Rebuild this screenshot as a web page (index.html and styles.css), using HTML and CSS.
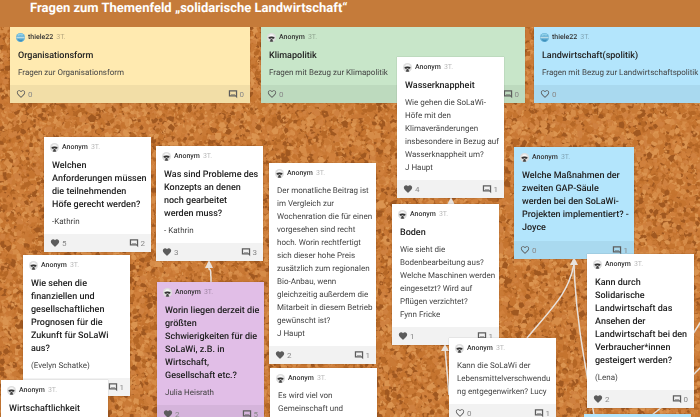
FILE: index.html
```
<!DOCTYPE html>
<html lang="de">
<head>
    <meta charset="utf-8">
    <title>Fragen zum Themenfeld „solidarische Landwirtschaft“</title>
    <link rel="stylesheet" href="styles.css">
</head>
<body>

    <!-- shared icons -->
    <svg class="sprite" aria-hidden="true">
        <symbol id="heart" viewBox="0 0 24 24">
            <path d="M12 21.3l-1.5-1.3C5.4 15.4 2 12.3 2 8.5 2 5.4 4.4 3 7.500 3c1.700 0 3.400.8 4.500 2.100C13.100 3.800 14.800 3 16.500 3 19.600 3 22 5.400 22 8.500c0 3.800-3.400 6.900-8.500 11.500z"/>
        </symbol>
        <symbol id="heart-line" viewBox="0 0 24 24">
            <path d="M16.500 3c-1.700 0-3.400.8-4.500 2.100C10.900 3.800 9.200 3 7.500 3 4.400 3 2 5.400 2 8.500c0 3.800 3.400 6.900 8.500 11.500l1.500 1.300 1.500-1.300C18.600 15.400 22 12.300 22 8.500 22 5.400 19.600 3 16.500 3zM12 18.600C7.200 14.200 4 11.400 4 8.500 4 6.500 5.500 5 7.500 5c1.500 0 3 1 3.600 2.400h1.800C13.500 6 15 5 16.500 5 18.500 5 20 6.500 20 8.500c0 2.900-3.200 5.700-8 10.100z"/>
        </symbol>
        <symbol id="comment" viewBox="0 0 24 24">
            <path fill-rule="evenodd" d="M2 3h20v19l-4-4H2zM5 6v9h14V6z"/>
            <path d="M7 12h10v2H7z" opacity=".6"/>
        </symbol>
        <symbol id="anon" viewBox="0 0 24 24">
            <circle cx="12" cy="12" r="12" fill="#dedede"/>
            <path d="M6 8c1-5 11-5 12 0z" fill="#fafafa"/>
            <path d="M4 11c5-2 11-2 16 0v2c-2 3-5 3-7 1h-2c-2 2-5 2-7-1z" fill="#333"/>
            <path d="M9 16h6l-1 2 3 4c-3 2-7 2-10 0l3-4z" fill="#444"/>
        </symbol>
        <symbol id="globe" viewBox="0 0 24 24">
            <circle cx="12" cy="12" r="12" fill="#62afd5"/>
            <path d="M3 5c5-5 13-5 18 0l-5 2-5-1-5 2z" fill="#8fd0e8"/>
            <path d="M1 10h22v4H1z" fill="#b9dbe6"/>
            <path d="M4 16l7 2 8-1-3 5c-5 2-9 0-12-6z" fill="#3e91bd"/>
        </symbol>
    </svg>

    <header class="topbar">
        <h1>Fragen zum Themenfeld „solidarische Landwirtschaft“</h1>
    </header>

    <main class="board">
        <canvas class="cork" id="cork"></canvas>

        <!-- arrows between cards -->
        <svg class="links" aria-hidden="true">
            <path d="M211 255v-5c-1-6 1-7-2-8v-6"/>
            <path class="head" d="M209 233l4 8h-8z"/>
            <path class="head" d="M451 170l4 8h-8z"/>
            <path d="M449 368l-4-47"/>
            <path class="head" d="M445 317l4 7h-8z"/>
            <path d="M527 311c24-29 42-45 47-74"/>
            <path d="M596 400c-8-50-20-100-22-163"/>
            <path class="head" d="M574 230l4 8h-8z"/>
            <path d="M693 307l10-16M693 348l10-10"/>
            <path d="M652 388l10-8"/>
        </svg>

        <article class="card yellow c-orga">
            <div class="by"><svg><use href="#globe"/></svg><b>thiele22</b><time>3T.</time></div>
            <h2>Organisationsform</h2>
            <p>Fragen zur Organisationsform</p>
            <footer><button aria-label="Gefällt mir"><svg><use href="#heart-line"/></svg>0</button><button aria-label="Kommentare"><svg><use href="#comment"/></svg>0</button></footer>
        </article>

        <article class="card green c-klima">
            <div class="by"><svg><use href="#anon"/></svg><b>Anonym</b><time>3T.</time></div>
            <h2>Klimapolitik</h2>
            <p>Fragen mit Bezug zur Klimapolitik</p>
            <footer><button aria-label="Gefällt mir"><svg><use href="#heart-line"/></svg>0</button><button aria-label="Kommentare"><svg><use href="#comment"/></svg>0</button></footer>
        </article>

        <article class="card blue c-landw">
            <div class="by"><svg><use href="#globe"/></svg><b>thiele22</b><time>3T.</time></div>
            <h2>Landwirtschaft(spolitik)</h2>
            <p>Fragen mit Bezug zur Landwirtschaftspolitik</p>
            <footer><button aria-label="Gefällt mir"><svg><use href="#heart-line"/></svg>0</button></footer>
        </article>

        <article class="card c-anford">
            <div class="by"><svg><use href="#anon"/></svg><b>Anonym</b><time>3T.</time></div>
            <h2>Welchen<br>Anforderungen müssen die teilnehmenden<br>Höfe gerecht werden?</h2>
            <p>-Kathrin</p>
            <footer><button aria-label="Gefällt mir"><svg><use href="#heart"/></svg>5</button><button aria-label="Kommentare"><svg><use href="#comment"/></svg>2</button></footer>
        </article>

        <article class="card c-problem">
            <div class="by"><svg><use href="#anon"/></svg><b>Anonym</b><time>3T.</time></div>
            <h2>Was sind Probleme des Konzepts an denen noch gearbeitet<br>werden muss?</h2>
            <p>- Kathrin</p>
            <footer><button aria-label="Gefällt mir"><svg><use href="#heart"/></svg>3</button><button aria-label="Kommentare"><svg><use href="#comment"/></svg>3</button></footer>
        </article>

        <article class="card c-finanz">
            <div class="by"><svg><use href="#anon"/></svg><b>Anonym</b><time>3T.</time></div>
            <h2>Wie sehen die finanziellen und gesellschaftlichen Prognosen für die Zukunft für SoLaWi aus?</h2>
            <p>(Evelyn Schatke)</p>
            <footer><span></span><button aria-label="Kommentare"><svg><use href="#comment"/></svg>1</button></footer>
        </article>

        <article class="card c-wirt">
            <div class="by"><svg><use href="#anon"/></svg><b>Anonym</b><time>3T.</time></div>
            <h2>Wirtschaftlichkeit</h2>
        </article>

        <article class="card purple c-schwier">
            <div class="by"><svg><use href="#anon"/></svg><b>Anonym</b><time>3T.</time></div>
            <h2>Worin liegen derzeit die größten<br>Schwierigkeiten für die SoLaWi, z.B. in<br>Wirtschaft,<br>Gesellschaft etc.?</h2>
            <p>Julia Heisrath</p>
            <footer><button aria-label="Gefällt mir"><svg><use href="#heart"/></svg>2</button><button aria-label="Kommentare"><svg><use href="#comment"/></svg>5</button></footer>
        </article>

        <article class="card c-beitrag">
            <div class="by"><svg><use href="#anon"/></svg><b>Anonym</b><time>3T.</time></div>
            <p>Der monatliche Beitrag ist<br>im Vergleich zur<br>Wochenration die für einen vorgesehen sind recht<br>hoch. Worin rechtfertigt<br>sich dieser hohe Preis<br>zusätzlich zum regionalen Bio-Anbau, wenn<br>gleichzeitig außerdem die Mitarbeit in diesem Betrieb gewünscht ist?<br>J Haupt</p>
            <footer><button aria-label="Gefällt mir"><svg><use href="#heart"/></svg>2</button><button aria-label="Kommentare"><svg><use href="#comment"/></svg>1</button></footer>
        </article>

        <article class="card c-gemein">
            <div class="by"><svg><use href="#anon"/></svg><b>Anonym</b><time>3T.</time></div>
            <p>Es wird viel von<br>Gemeinschaft und</p>
        </article>

        <article class="card c-wasser">
            <div class="by"><svg><use href="#anon"/></svg><b>Anonym</b><time>3T.</time></div>
            <h2>Wasserknappheit</h2>
            <p>Wie gehen die SoLaWi-Höfe mit den<br>Klimaveränderungen insbesondere in Bezug auf Wasserknappheit um?<br>J Haupt</p>
            <footer><button aria-label="Gefällt mir"><svg><use href="#heart"/></svg>4</button><button aria-label="Kommentare"><svg><use href="#comment"/></svg>1</button></footer>
        </article>

        <article class="card c-boden">
            <div class="by"><svg><use href="#anon"/></svg><b>Anonym</b><time>3T.</time></div>
            <h2>Boden</h2>
            <p>Wie sieht die<br>Bodenbearbeitung aus? Welche Maschinen werden eingesetzt? Wird auf<br>Pflügen verzichtet?<br>Fynn Fricke</p>
            <footer><button aria-label="Gefällt mir"><svg><use href="#heart"/></svg>1</button><button aria-label="Kommentare"><svg><use href="#comment"/></svg>1</button></footer>
        </article>

        <article class="card c-lebens">
            <div class="by"><svg><use href="#anon"/></svg><b>Anonym</b><time>3T.</time></div>
            <p>Kann die SoLaWi der Lebensmittelverschwendung entgegenwirken? Lucy</p>
            <footer><button aria-label="Gefällt mir"><svg><use href="#heart-line"/></svg>0</button><button aria-label="Kommentare"><svg><use href="#comment"/></svg>1</button></footer>
        </article>

        <article class="card blue c-gap">
            <div class="by"><svg><use href="#anon"/></svg><b>Anonym</b><time>3T.</time></div>
            <h2>Welche Maßnahmen der zweiten GAP-Säule<br>werden bei den SoLaWi-Projekten implementiert? - Joyce</h2>
            <footer><button aria-label="Gefällt mir"><svg><use href="#heart-line"/></svg>0</button><button aria-label="Kommentare"><svg><use href="#comment"/></svg>1</button></footer>
        </article>

        <article class="card c-ansehen">
            <div class="by"><svg><use href="#anon"/></svg><b>Anonym</b><time>3T.</time></div>
            <h2>Kann durch<br>Solidarische<br>Landwirtschaft das Ansehen der<br>Landwirtschaft bei den Verbraucher*innen gesteigert werden?</h2>
            <p>(Lena)</p>
            <footer><button aria-label="Gefällt mir"><svg><use href="#heart"/></svg>2</button><button aria-label="Kommentare"><svg><use href="#comment"/></svg>0</button></footer>
        </article>

        <article class="card blue c-next"></article>
    </main>

    <script src="cork.js"></script>
</body>
</html>
```
FILE: styles.css
```
* {
    box-sizing: border-box;
}

html,
body {
    height: 100%;
    margin: 0;
}

body {
    display: flex;
    flex-direction: column;
    overflow: hidden;
    font-family: Roboto, "Liberation Sans", sans-serif;
    text-rendering: geometricPrecision;
    background: #c57b3a;
}

.sprite {
    position: absolute;
    width: 0;
    height: 0;
}

.topbar {
    padding: 0 30px 10px;
    background: #c57b3a;
}

.topbar h1 {
    margin: 0;
    font-size: 13px;
    line-height: 17px;
    font-weight: 700;
    color: #fff;
}

.board {
    position: relative;
    flex: 1;
    overflow: hidden;
}

.cork,
.links {
    position: absolute;
    top: 0;
    left: 0;
    width: 100%;
    height: 100%;
}

.links path {
    fill: none;
    stroke: #e8e2dd;
    stroke-width: 1.5;
}

.links .head {
    fill: #e8e2dd;
    stroke: none;
}

/* cards */
.card {
    position: absolute;
    width: 107px;
    padding-top: 4px;
    background: #fff;
    box-shadow: 0 0 1px rgba(0, 0, 0, .3);
}

.yellow { background: #ffeab0; }
.green { background: #c8e6c9; }
.blue { background: #b3e5fc; }
.purple { background: #e1bee7; }

.by {
    display: flex;
    align-items: center;
    gap: 3px;
    height: 12px;
    padding-left: 6px;
    font-size: 7px;
    color: #333;
}

.by b {
    font-weight: 500;
}

.by svg {
    width: 9px;
    height: 9px;
}

.by time {
    color: rgba(0, 0, 0, .3);
}

.card h2,
.card p {
    line-height: 13px;
    overflow-wrap: break-word;
}

.card h2 {
    margin: 7px 2px 3px 8px;
    font-size: 9px;
    font-weight: 500;
    color: #222;
}

.card p {
    margin: 5px 2px 4px 8px;
    font-size: 8px;
    color: #444;
}

.card h2 + p {
    margin-top: 3px;
}

.card footer {
    display: flex;
    justify-content: space-between;
    align-items: center;
    height: 18px;
    margin-top: 6px;
    padding: 0 6px;
    background: rgba(0, 0, 0, .05);
}

.card footer button {
    display: flex;
    align-items: center;
    gap: 2px;
    padding: 0;
    border: 0;
    background: none;
    font: 8px Roboto, "Liberation Sans", sans-serif;
    color: #888;
}

.card footer svg {
    width: 10px;
    height: 10px;
    fill: #5c5c5c;
}

/* places on the board */
.c-orga { left: 10px; top: 0; width: 240px; }
.c-klima { left: 261px; top: 0; width: 264px; }
.c-landw { left: 534px; top: 0; width: 240px; }
.c-anford { left: 44px; top: 110px; }
.c-problem { left: 156px; top: 119px; }
.c-finanz { left: 23px; top: 228px; }
.c-wirt { left: 1px; top: 353px; height: 100px; }
.c-schwier { left: 157px; top: 255px; }
.c-beitrag { left: 269px; top: 136px; }
.c-gemein { left: 270px; top: 341px; height: 100px; }
.c-wasser { left: 397px; top: 30px; }
.c-boden { left: 392px; top: 177px; }
.c-lebens { left: 449px; top: 311px; }
.c-gap { left: 514px; top: 120px; width: 120px; }
.c-ansehen { left: 587px; top: 227px; }
.c-next { left: 584px; top: 387px; height: 40px; }
```
FILE: cork.js
```
var canvas = document.getElementById("cork");
var ctx = canvas.getContext("2d");
var colors = ["#cf8140", "#c5742f", "#d68c48", "#b56726", "#c97a36", "#a05820", "#db9450", "#d0803c"];
var seed = 7;

function rnd() {
    seed = (seed * 16807) % 2147483647;
    return seed / 2147483647;
}

// small irregular chips thrown over each other
function drawCork() {
    var w = canvas.width = canvas.clientWidth;
    var h = canvas.height = canvas.clientHeight;
    seed = 7;
    ctx.fillStyle = "#c97835";
    ctx.fillRect(0, 0, w, h);
    for (var i = 0; i < w * h / 6; i++) {
        var x = rnd() * w, y = rnd() * h;
        var r = 1 + rnd() * 3, turn = rnd() * 6;
        ctx.fillStyle = colors[Math.floor(rnd() * colors.length)];
        ctx.beginPath();
        for (var k = 0; k < 5; k++) {
            var a = turn + k * 1.257, d = r * (0.5 + rnd() * 0.8);
            ctx.lineTo(x + Math.cos(a) * d, y + Math.sin(a) * d);
        }
        ctx.fill();
    }
}

drawCork();
window.addEventListener("resize", drawCork);
```
